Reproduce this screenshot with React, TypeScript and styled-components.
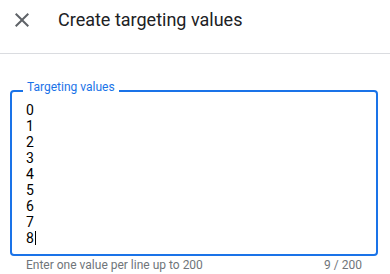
import { FC } from 'react'
import styled, { createGlobalStyle } from 'styled-components'

const VALUES = ['0', '1', '2', '3', '4', '5', '6', '7', '8']
const MAX_VALUES = 200

const GlobalStyle = createGlobalStyle`
  html, body {
    margin: 0;
    padding: 0;
    background: #ffffff;
  }
  body {
    font-family: Roboto, 'Noto Sans', Arial, sans-serif;
    -webkit-font-smoothing: antialiased;
  }
`

const CloseIcon: FC = () => (
  <svg width="24" height="24" viewBox="0 0 24 24" fill="currentColor" aria-hidden>
    <path d="M19 6.41 17.59 5 12 10.59 6.41 5 5 6.41 10.59 12 5 17.59 6.41 19 12 13.41 17.59 19 19 17.59 13.41 12z" />
  </svg>
)

const App: FC = () => {
  return (
    <>
      <GlobalStyle />
      <Dialog>
        <Header>
          <IconButton aria-label="Close">
            <CloseIcon />
          </IconButton>
          <Title>Create targeting values</Title>
        </Header>

        <Body>
          <Field>
            <FloatingLabel>Targeting values</FloatingLabel>
            <Lines>
              {VALUES.map((value, i) => (
                <Line key={value}>
                  {value}
                  {i === VALUES.length - 1 && <Caret />}
                </Line>
              ))}
            </Lines>
          </Field>
          <Helper>
            <span>Enter one value per line up to {MAX_VALUES}</span>
            <span>
              {VALUES.length} / {MAX_VALUES}
            </span>
          </Helper>
        </Body>
      </Dialog>
    </>
  )
}

export default App

const Dialog = styled.div`
  width: 390px;
  height: 274px;
  background: #ffffff;
  overflow: hidden;
`
const Header = styled.header`
  display: flex;
  align-items: center;
  height: 24px;
  padding: 8px 0 21px 10px;
  border-bottom: 1px solid #dadce0;
`
const IconButton = styled.button`
  display: flex;
  align-items: center;
  justify-content: center;
  width: 24px;
  height: 24px;
  padding: 0;
  border: none;
  background: none;
  color: #5f6368;
  cursor: pointer;
`
const Title = styled.h1`
  margin: 0 0 0 24px;
  font-size: 18px;
  line-height: 24px;
  font-weight: 400;
  color: #202124;
`
const Body = styled.div`
  margin: 36px 12px 0 10px;
`
const Field = styled.div`
  position: relative;
  border: 2px solid #1a73e8;
  border-radius: 4px;
  padding: 10px 14px 8px;
`
const FloatingLabel = styled.label`
  position: absolute;
  top: -13px;
  left: 11px;
  padding: 0 4px;
  background: #ffffff;
  font-size: 12px;
  line-height: 16px;
  color: #1a73e8;
`
const Lines = styled.div`
  display: flex;
  flex-direction: column;
`
const Line = styled.div`
  display: flex;
  align-items: center;
  font-size: 14px;
  line-height: 16px;
  height: 16px;
  color: #000000;
`
const Caret = styled.span`
  display: inline-block;
  width: 1px;
  height: 14px;
  margin-left: 1px;
  background: #000000;
`
const Helper = styled.div`
  display: flex;
  justify-content: space-between;
  padding: 1px 16px 0;
  font-size: 12px;
  line-height: 16px;
  color: #70757a;
`
